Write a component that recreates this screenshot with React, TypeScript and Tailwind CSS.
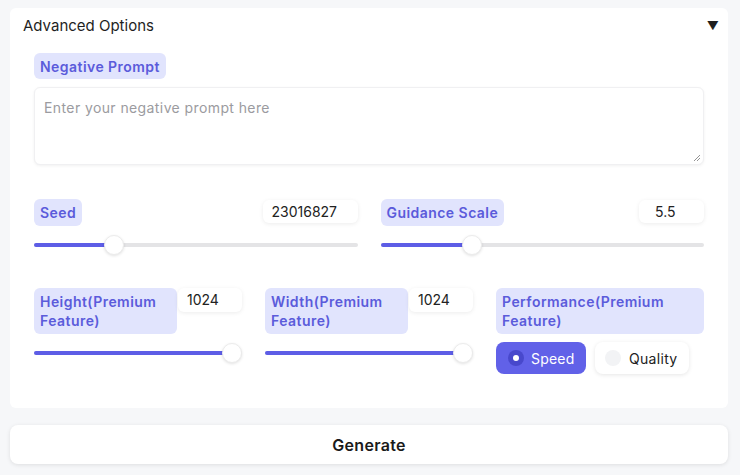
import React from "react";

const font = { fontFamily: "Inter, 'Noto Sans', 'Liberation Sans', sans-serif" };

function Badge({ children, className = "" }: { children: React.ReactNode; className?: string }) {
  return (
    <div
      className={`rounded-md bg-[#e1e4fd] px-[6px] text-[14px] font-semibold leading-[19px] tracking-[0.45px] text-[#5b5bdb] ${className}`}
    >
      {children}
    </div>
  );
}

function Slider({ pct }: { pct: number }) {
  return (
    <div className="relative h-[20px] w-full">
      <div className="absolute left-0 right-0 top-[8px] h-[4px] rounded-full bg-[#e4e4e6]" />
      <div
        className="absolute left-0 top-[8px] h-[4px] rounded-full bg-[#5d5de6]"
        style={{ width: `calc(${pct}% * (100% - 20px) / 100% + 10px)` }}
      />
      <div
        className="absolute top-0 h-[20px] w-[20px] rounded-full border border-[#ececec] bg-white shadow-[0_1px_3px_rgba(0,0,0,0.12)]"
        style={{ left: `calc((100% - 20px) * ${pct / 100})` }}
      />
    </div>
  );
}

function ValueBox({ value, className = "" }: { value: string; className?: string }) {
  return (
    <div
      className={`rounded-md bg-white text-[14px] leading-[23px] text-[#222] shadow-[0_1px_4px_rgba(0,0,0,0.08)] ${className}`}
    >
      {value}
    </div>
  );
}

export default function App() {
  return (
    <div className="h-[475px] w-[740px] overflow-hidden bg-[#f6f7f9] pl-[10px] pr-[12px] pt-[8px]" style={font}>
      <div className="rounded-md bg-white pb-[34px]">
        <div className="flex h-[35px] items-center justify-between pl-[13px] pr-[9px] pt-[1px]">
          <span className="text-[15px] text-[#1f1f1f]">Advanced Options</span>
          <span className="text-[12px] text-[#1f1f1f]">▼</span>
        </div>
        <div className="px-[24px] pt-[10px]">
          <Badge className="inline-block py-[3.5px]">Negative Prompt</Badge>
          <div className="relative mt-[8px] h-[78px] rounded-md border border-[#f0f0f2] bg-white px-[9px] pt-[7px] shadow-[0_1px_3px_rgba(0,0,0,0.06)]">
            <span className="text-[14px] tracking-[0.4px] text-[#9b9ba0]">Enter your negative prompt here</span>
            <svg className="absolute bottom-[2px] right-[2px]" width="8" height="8" viewBox="0 0 8 8">
              <path d="M7 1 L1 7 M7 4 L4 7" stroke="#888" strokeWidth="0.9" />
            </svg>
          </div>

          <div className="mt-[34px] grid grid-cols-2 gap-x-[23px]">
            <div>
              <div className="flex items-start justify-between">
                <Badge className="py-[4px]">Seed</Badge>
                <ValueBox value="23016827" className="mt-[1px] w-[95px] pl-[9px]" />
              </div>
              <div className="mt-[9px]">
                <Slider pct={23} />
              </div>
            </div>
            <div>
              <div className="flex items-start justify-between">
                <Badge className="py-[4px]">Guidance Scale</Badge>
                <ValueBox value="5.5" className="mt-[1px] w-[65px] pl-[16px]" />
              </div>
              <div className="mt-[9px]">
                <Slider pct={27} />
              </div>
            </div>
          </div>

          <div className="mt-[33px] grid grid-cols-3 gap-x-[23px]">
            <div>
              <div className="flex items-start">
                <Badge className="h-[46px] flex-1 py-[4px]">Height(Premium Feature)</Badge>
                <ValueBox value="1024" className="ml-[1px] w-[64px] pl-[9px] leading-[24px]" />
              </div>
              <div className="mt-[9px]">
                <Slider pct={100} />
              </div>
            </div>
            <div>
              <div className="flex items-start">
                <Badge className="h-[46px] flex-1 py-[4px]">Width(Premium Feature)</Badge>
                <ValueBox value="1024" className="ml-[1px] w-[64px] pl-[9px] leading-[24px]" />
              </div>
              <div className="mt-[9px]">
                <Slider pct={100} />
              </div>
            </div>
            <div>
              <Badge className="h-[46px] py-[4px]">Performance(Premium Feature)</Badge>
              <div className="mt-[8px] flex gap-[9px]">
                <div className="flex h-[32px] w-[90px] items-center rounded-lg bg-[#6161e8] pl-[12px]">
                  <span className="flex h-[16px] w-[16px] items-center justify-center rounded-full bg-[#4848cc]">
                    <span className="h-[6px] w-[6px] rounded-full bg-white" />
                  </span>
                  <span className="ml-[7px] text-[14px] tracking-[0.2px] text-white">Speed</span>
                </div>
                <div className="flex h-[32px] w-[94px] items-center rounded-lg bg-white pl-[10px] shadow-[0_1px_4px_rgba(0,0,0,0.1)]">
                  <span className="h-[16px] w-[16px] rounded-full bg-[#f2f3f5]" />
                  <span className="ml-[8px] text-[14px] tracking-[0.3px] text-[#222]">Quality</span>
                </div>
              </div>
            </div>
          </div>
        </div>
      </div>

      <button className="mt-[17px] flex h-[39px] w-full items-center justify-center rounded-lg bg-white text-[16px] font-semibold tracking-[0.3px] text-[#1a1a1a] shadow-[0_1px_4px_rgba(0,0,0,0.1)]">
        Generate
      </button>
    </div>
  );
}
